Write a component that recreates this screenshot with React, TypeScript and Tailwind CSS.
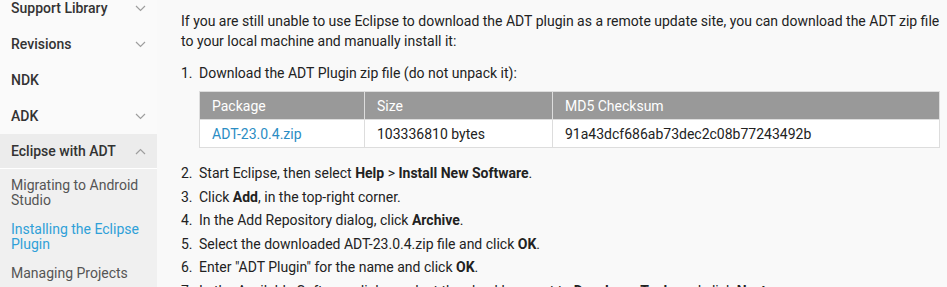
import React from "react";

const Chevron = ({ up = false }: { up?: boolean }) => (
  <svg
    width="11"
    height="7"
    viewBox="0 0 11 7"
    className="text-[#9e9e9e]"
    fill="none"
    stroke="currentColor"
    strokeWidth="1.2"
  >
    {up ? <path d="M1 6 L5.5 1.5 L10 6" /> : <path d="M1 1 L5.5 5.5 L10 1" />}
  </svg>
);

const navItems = [
  { label: "Support Library", chevron: true },
  { label: "Revisions", chevron: true },
  { label: "NDK", chevron: false },
  { label: "ADK", chevron: true },
];

const Sidebar = () => (
  <aside className="w-[157px] shrink-0 bg-[#fafafa]">
    <ul className="mt-[-10px]">
      {navItems.map((item) => (
        <li
          key={item.label}
          className="h-9 flex items-center justify-between pl-[11px] pr-[11px] text-[14px] font-medium text-[#333]"
        >
          <span>{item.label}</span>
          {item.chevron && <Chevron />}
        </li>
      ))}
      <li className="bg-[#ececec]">
        <div className="h-[35px] flex items-center justify-between pl-[11px] pr-[11px] text-[14px] font-medium text-[#333] border-b border-white">
          <span>Eclipse with ADT</span>
          <Chevron up />
        </div>
        <ul className="bg-[#f0f0f0] pt-[2px] text-[14px] leading-[15px] text-[#555]">
          <li className="px-[11px] py-[7px]">Migrating to Android Studio</li>
          <li className="px-[11px] py-[7px] text-[#2fa0d8]">
            Installing the Eclipse Plugin
          </li>
          <li className="px-[11px] py-[7px]">Managing Projects</li>
          <li className="px-[11px] py-[7px]">Building and Running</li>
        </ul>
      </li>
    </ul>
  </aside>
);

const Content = () => (
  <main className="flex-1 pl-6 pr-[7px] pt-[11px] text-[14px] leading-5 text-[#222]">
    <p>
      If you are still unable to use Eclipse to download the ADT plugin as a
      remote update site, you can download the ADT zip file to your local
      machine and manually install it:
    </p>
    <ol className="mt-3">
      <li className="flex">
        <span className="w-[18px] shrink-0">1.</span>
        <div className="flex-1">
          <div>Download the ADT Plugin zip file (do not unpack it):</div>
          <table className="mt-2 w-full border border-[#ddd] border-collapse text-left">
            <thead>
              <tr className="bg-[#999] text-white h-[28px]">
                <th className="w-[165px] font-normal px-[12px] border border-[#ddd]">
                  Package
                </th>
                <th className="w-[188px] font-normal px-[12px] border border-[#ddd]">
                  Size
                </th>
                <th className="font-normal px-[12px] border border-[#ddd]">
                  MD5 Checksum
                </th>
              </tr>
            </thead>
            <tbody>
              <tr className="bg-white h-[28px]">
                <td className="px-[12px] border border-[#ddd] text-[#2b8dc4]">
                  ADT-23.0.4.zip
                </td>
                <td className="px-[12px] border border-[#ddd]">
                  103336810 bytes
                </td>
                <td className="px-[12px] border border-[#ddd]">
                  91a43dcf686ab73dec2c08b77243492b
                </td>
              </tr>
            </tbody>
          </table>
        </div>
      </li>
      <li className="flex mt-[15px]">
        <span className="w-[18px] shrink-0">2.</span>
        <span>
          Start Eclipse, then select <b className="font-bold">Help</b> &gt;{" "}
          <b className="font-bold">Install New Software</b>.
        </span>
      </li>
      <li className="flex mt-[3.5px]">
        <span className="w-[18px] shrink-0">3.</span>
        <span>
          Click <b className="font-bold">Add</b>, in the top-right corner.
        </span>
      </li>
      <li className="flex mt-[3.5px]">
        <span className="w-[18px] shrink-0">4.</span>
        <span>
          In the Add Repository dialog, click{" "}
          <b className="font-bold">Archive</b>.
        </span>
      </li>
      <li className="flex mt-[3.5px]">
        <span className="w-[18px] shrink-0">5.</span>
        <span>
          Select the downloaded ADT-23.0.4.zip file and click{" "}
          <b className="font-bold">OK</b>.
        </span>
      </li>
      <li className="flex mt-[3.5px]">
        <span className="w-[18px] shrink-0">6.</span>
        <span>
          Enter "ADT Plugin" for the name and click{" "}
          <b className="font-bold">OK</b>.
        </span>
      </li>
      <li className="flex mt-[3.5px]">
        <span className="w-[18px] shrink-0">7.</span>
        <span>
          In the Available Software dialog, select the checkbox next to{" "}
          <b className="font-bold">Developer Tools</b> and click{" "}
          <b className="font-bold">Next</b>.
        </span>
      </li>
    </ol>
  </main>
);

export default function App() {
  return (
    <div
      className="w-[947px] h-[287px] overflow-hidden flex bg-[#f9f9f9]"
      style={{ fontFamily: "Roboto, 'Liberation Sans', sans-serif" }}
    >
      <Sidebar />
      <Content />
    </div>
  );
}
